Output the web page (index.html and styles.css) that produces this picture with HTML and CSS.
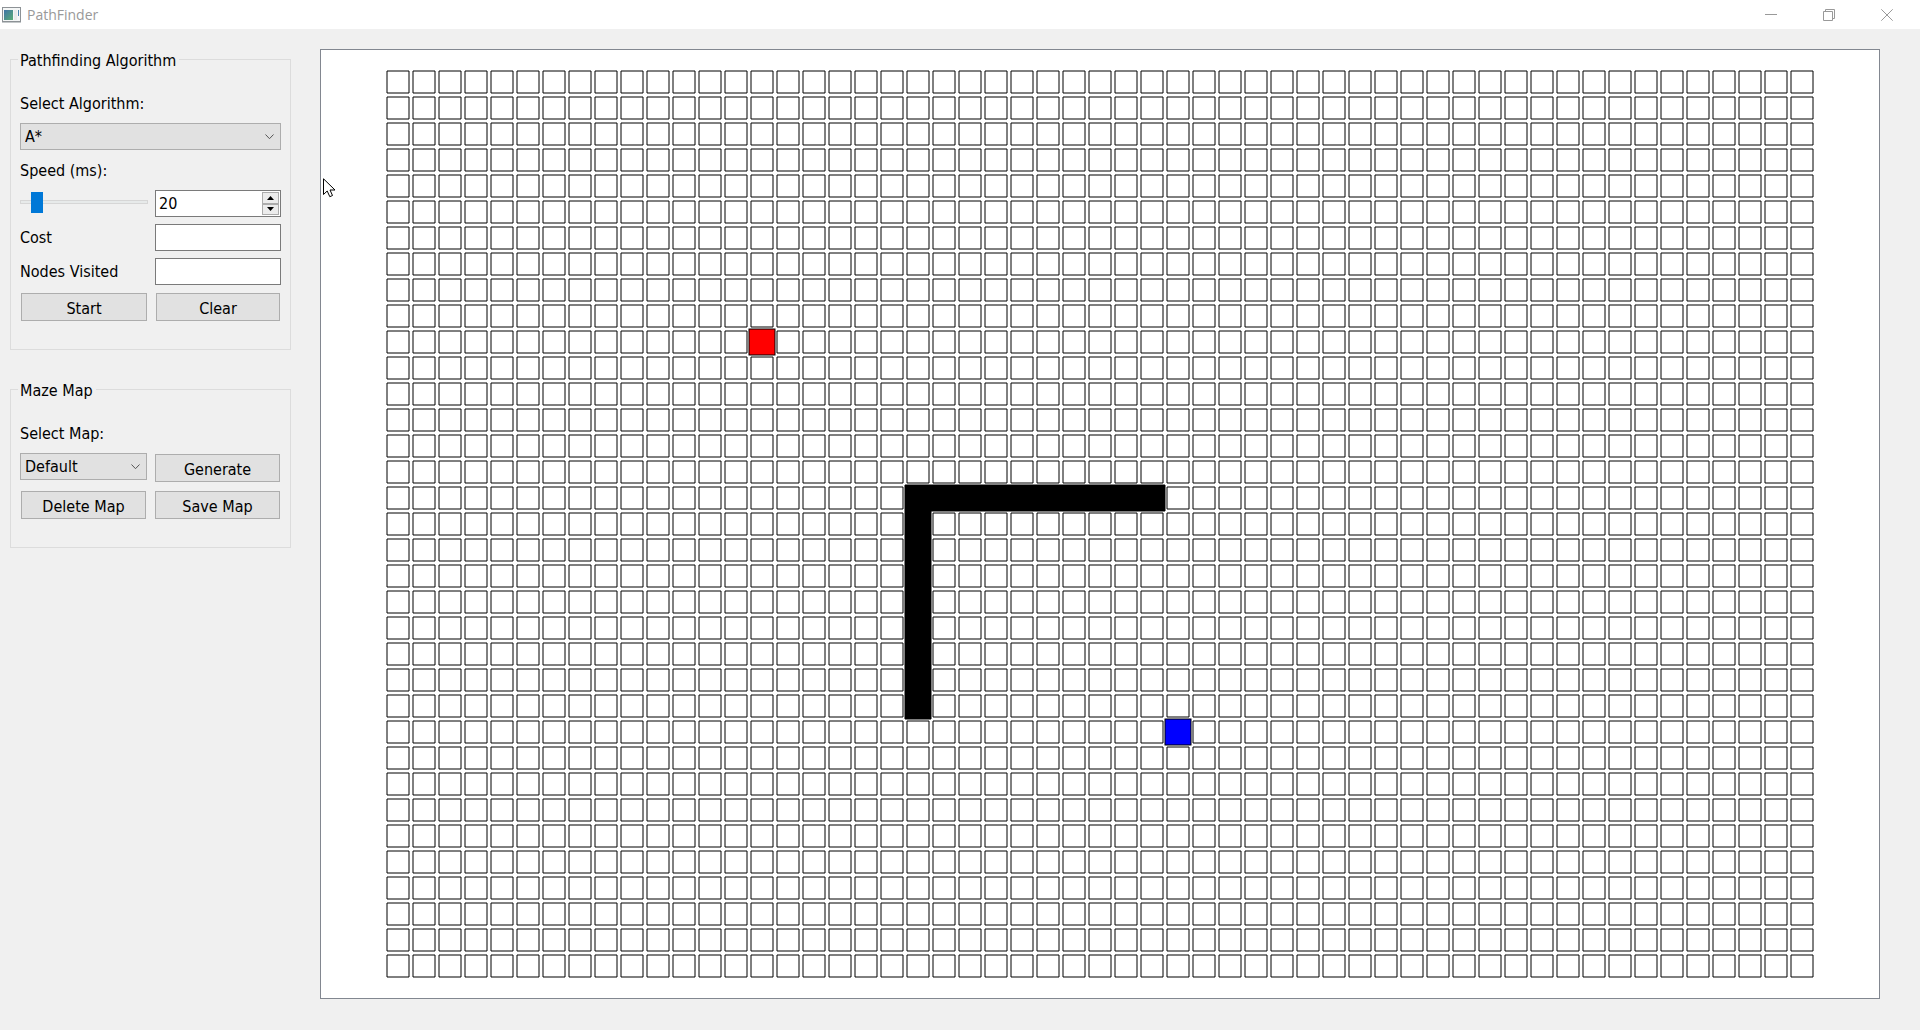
FILE: index.html
```html
<!DOCTYPE html>
<html lang="en">
<head>
<meta charset="utf-8">
<title>PathFinder</title>
<link rel="stylesheet" href="styles.css">
</head>
<body>
<header class="titlebar">
  <svg class="app-icon" width="19" height="16" viewBox="0 0 19 16" aria-hidden="true">
    <defs>
      <linearGradient id="screen" x1="0" y1="0" x2="1" y2="1">
        <stop offset="0" stop-color="#3f74a8"/>
        <stop offset="1" stop-color="#58ad74"/>
      </linearGradient>
    </defs>
    <rect x="0.5" y="0.5" width="18" height="14" fill="#f4f6f6" stroke="#8d9296"/>
    <path d="M0 15.500H19" stroke="#c4c8ca"/>
    <rect x="2" y="3" width="9" height="10" fill="url(#screen)"/>
    <rect x="12" y="3" width="3" height="10" fill="#e6eaea"/>
    <rect x="16" y="3" width="1" height="6" fill="#4a86b0"/>
  </svg>
  <h1 class="title">PathFinder</h1>
  <div class="window-controls">
    <button type="button" aria-label="Minimize">
      <svg width="12" height="12" viewBox="0 0 12 12"><path d="M0 5.500H12"/></svg>
    </button>
    <button type="button" aria-label="Restore">
      <svg width="12" height="12" viewBox="0 0 12 12"><path d="M0.500 2.500H9.500V11.500H0.500ZM2.500 2.500V0.500H11.500V9.500H9.500"/></svg>
    </button>
    <button type="button" aria-label="Close">
      <svg width="12" height="12" viewBox="0 0 12 12"><path d="M0.300 0.300L11.700 11.700M11.700 0.300L0.300 11.700"/></svg>
    </button>
  </div>
</header>

<main class="workspace">
  <form class="sidebar">
    <fieldset class="group">
      <legend>Pathfinding Algorithm</legend>
      <div class="fields">
        <label class="wide" for="algorithm">Select Algorithm:</label>
        <div class="combo wide">
          <select id="algorithm"><option>A*</option></select>
          <svg width="9" height="6" viewBox="0 0 9 6" aria-hidden="true"><path d="M0.500 0.500L4.500 4.700L8.500 0.500"/></svg>
        </div>
        <label class="wide" for="speed">Speed (ms):</label>
        <input class="slider" type="range" min="1" max="210" value="20" aria-label="Speed slider">
        <div class="spinbox">
          <input id="speed" type="number" value="20">
          <div class="steps">
            <button type="button" aria-label="Increase"><svg width="7" height="4" viewBox="0 0 7 4"><path d="M0 4L3.500 0L7 4Z"/></svg></button>
            <button type="button" aria-label="Decrease"><svg width="7" height="4" viewBox="0 0 7 4"><path d="M0 0L3.500 4L7 0Z"/></svg></button>
          </div>
        </div>
        <label for="cost">Cost</label>
        <input class="readout" id="cost" type="text" readonly>
        <label for="visited">Nodes Visited</label>
        <input class="readout" id="visited" type="text" readonly>
        <button class="push" type="button">Start</button>
        <button class="push" type="button">Clear</button>
      </div>
    </fieldset>

    <fieldset class="group">
      <legend>Maze Map</legend>
      <div class="fields even">
        <label class="wide" for="map">Select Map:</label>
        <div class="combo">
          <select id="map"><option>Default</option></select>
          <svg width="9" height="6" viewBox="0 0 9 6" aria-hidden="true"><path d="M0.500 0.500L4.500 4.700L8.500 0.500"/></svg>
        </div>
        <button class="push" type="button">Generate</button>
        <button class="push" type="button">Delete Map</button>
        <button class="push" type="button">Save Map</button>
      </div>
    </fieldset>
  </form>

  <section class="board" aria-label="Maze">
    <svg class="grid" width="1430" height="910" viewBox="0 0 1430 910">
      <defs>
        <pattern id="cell" width="26" height="26" patternUnits="userSpaceOnUse">
          <rect x="2" y="2" width="22" height="22" fill="#fff" stroke="#000" stroke-linejoin="bevel"/>
        </pattern>
      </defs>
      <rect width="1430" height="910" fill="url(#cell)"/>
      <path class="wall" d="M520 416H780V442H546V650H520Z"/>
      <rect class="start" x="364" y="260" width="26" height="26"/>
      <rect class="goal" x="780" y="650" width="26" height="26"/>
    </svg>
    <svg class="pointer" width="13" height="20" viewBox="0 0 13 20" aria-hidden="true">
      <path d="M0.500 0.800V16.500L4.200 13L6.800 18.700L9.500 17.500L7 12H12Z"/>
    </svg>
  </section>
</main>
</body>
</html>
```

FILE: styles.css
```css
* {
  box-sizing: border-box;
}

body {
  margin: 0;
  min-height: 100vh;
  display: flex;
  flex-direction: column;
  background: #f0f0f0;
  color: #000;
  font: 16px/26px "DejaVu Sans Condensed", Tahoma, "Noto Sans", sans-serif;
}

button,
input,
select {
  margin: 0;
  padding: 0;
  border-radius: 0;
  color: inherit;
  font: inherit;
}

/* Title bar */
.titlebar {
  display: flex;
  align-items: center;
  height: 29px;
  padding: 0 4px 0 2px;
  background: #fff;
}

.app-icon {
  margin-right: 6px;
}

.title {
  flex: 1;
  margin: 0;
  color: #999;
  font: 14px/28px "Open Sans", sans-serif;
}

.window-controls {
  display: flex;
}

.window-controls button {
  display: grid;
  place-items: center;
  width: 58px;
  height: 29px;
  border: 0;
  background: none;
}

.window-controls path {
  fill: none;
  stroke: #999;
}

/* Sidebar */
.workspace {
  flex: 1;
  display: flex;
  padding: 20px 40px 31px 10px;
}

.sidebar {
  display: flex;
  flex: 0 0 281px;
  flex-direction: column;
  gap: 29px;
  min-width: 0;
  margin-right: 29px;
}

.group {
  min-width: 0;
  margin: 0;
  padding: 0 9px 27px;
  border: 1px solid #dcdcdc;
}

.group legend {
  margin-left: -2px;
  padding: 2px 3px 0 2px;
  line-height: 19px;
}

.fields {
  display: grid;
  grid-template-columns: minmax(0, 128fr) minmax(0, 126fr);
  gap: 7px;
  padding-top: 20px;
}

.fields.even {
  grid-template-columns: repeat(2, minmax(0, 1fr));
}

.fields label {
  height: 26px;
  line-height: 28px;
}

.wide {
  grid-column: 1 / -1;
}

.combo {
  display: grid;
  align-items: center;
  align-self: start;
}

.combo select,
.combo svg {
  grid-area: 1 / 1;
}

.combo select {
  width: 100%;
  height: 27px;
  padding: 0 24px 0 4px;
  border: 1px solid #adadad;
  background: #e1e1e1;
  appearance: none;
}

.combo svg {
  justify-self: end;
  margin-right: 7px;
  fill: none;
  stroke: #555;
  pointer-events: none;
}

.slider {
  align-self: start;
  width: 100%;
  min-width: 0;
  height: 24px;
  background: none;
  appearance: none;
}

.slider::-webkit-slider-runnable-track {
  height: 4px;
  border: 1px solid #d6d6d6;
  background: #e7eaea;
}

.slider::-webkit-slider-thumb {
  width: 12px;
  height: 21px;
  margin-top: -9px;
  background: #0078d7;
  appearance: none;
}

.spinbox,
.readout {
  width: 100%;
  height: 27px;
  border: 1px solid #7a7a7a;
  background: #fff;
}

.spinbox {
  display: flex;
  padding: 1px;
}

.spinbox input {
  flex: 1;
  min-width: 0;
  padding: 1px 0 0 2px;
  border: 0;
  background: none;
  appearance: textfield;
}

.spinbox input::-webkit-inner-spin-button {
  appearance: none;
}

.steps {
  display: grid;
  grid-template-rows: 1fr 1fr;
  width: 17px;
}

.steps button {
  display: grid;
  place-items: center;
  border: 1px solid #acacac;
  background: #ececec;
}

.push {
  height: 28px;
  margin: 1px;
  padding-top: 2px;
  border: 1px solid #adadad;
  background: #e1e1e1;
}

/* Maze */
.board {
  position: relative;
  flex: 1;
  display: grid;
  place-items: center;
  border: 1px solid #828790;
  background: #fff;
}

.wall {
  fill: #000;
  stroke: #000;
}

.start {
  fill: #f00;
  stroke: #000;
}

.goal {
  fill: #00f;
  stroke: #000;
}

.pointer {
  position: absolute;
  top: 128px;
  left: 2px;
  fill: #fff;
  stroke: #000;
}
```
